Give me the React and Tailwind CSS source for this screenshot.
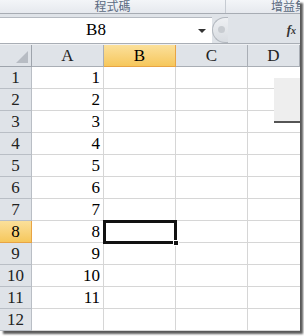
import React from 'react'

const cols = ['A', 'B', 'C', 'D']
const rows = [1, 2, 3, 4, 5, 6, 7, 8, 9, 10, 11, 12]
const font = { fontFamily: '"Liberation Serif", "Noto Sans CJK TC", serif' }

export default function App() {
  return (
    <div className="w-[304px] h-[336px] bg-white overflow-hidden relative" style={font}>
      <div className="w-[300px] h-[331px] bg-white flex flex-col shadow-[3px_3px_2px_rgba(0,0,0,0.65)]">
        {/* ribbon group labels */}
        <div className="h-[14px] flex bg-gradient-to-b from-[#f3f5f8] to-[#e6e9ee] border-b border-[#a7acb3] text-[12px] leading-[12px] text-[#5b6b82]" style={{ fontFamily: '"Noto Sans CJK TC", sans-serif' }}>
          <div className="w-[226px] border-r border-[#c6cbd2] flex justify-center items-start">
            <span>程式碼</span>
          </div>
          <div className="flex-1 pl-[45px] overflow-hidden whitespace-nowrap">增益集</div>
        </div>
        {/* formula bar */}
        <div className="h-[30px] bg-[#dfe3e8] flex items-center border-b border-[#a9aeb5] pt-[2px]">
          <div className="w-[212px] h-[26px] bg-white border-t border-[#b5bac1] flex items-center relative">
            <span className="flex-1 text-center text-[17px] text-black pr-[20px]">B8</span>
            <span className="absolute right-[6px] top-[11px] w-0 h-0 border-l-[4px] border-r-[4px] border-t-[4px] border-l-transparent border-r-transparent border-t-[#333]" />
          </div>
          <div className="w-[16px] h-[26px] rounded-l-full border border-[#b3b8bf] border-r-0 bg-gradient-to-b from-[#eef0f3] to-[#d8dce1] flex items-center justify-center">
            <span className="w-[7px] h-[7px] rounded-full bg-[#c8ccd1] ml-[2px]" />
          </div>
          <div className="flex-1 flex justify-end pr-[4px]">
            <span className="italic font-bold text-[13px] text-[#333]">f<span className="text-[10px]">x</span></span>
          </div>
        </div>
        <div className="h-[1px] bg-[#eef0f3]" />
        {/* sheet */}
        <div className="grid grid-cols-[32px_72px_72px_72px_1fr] relative">
          <div className="h-[22px] bg-[#dfe3e8] border-r border-b border-[#9ea4ac] relative">
            <span className="absolute right-[3px] bottom-[3px] w-0 h-0" style={{ borderBottom: '12px solid #b7bcc3', borderLeft: '12px solid transparent' }} />
          </div>
          {cols.map(c => (
            <div
              key={c}
              className={
                c === 'B'
                  ? 'h-[22px] bg-gradient-to-b from-[#fbe09a] to-[#f6c75a] border-r border-b border-[#e8a444] flex items-center justify-center text-[17px] text-black'
                  : 'h-[22px] bg-[#dfe3e8] border-r border-b border-[#a9aeb5] flex items-center justify-center text-[17px] text-[#222]'
              }
            >
              {c}
            </div>
          ))}
          {rows.map(r => (
            <React.Fragment key={r}>
              <div
                className={
                  r === 8
                    ? 'h-[22px] bg-gradient-to-b from-[#fbe09a] to-[#f6c75a] border-r border-b border-[#e8a444] flex items-center justify-center text-[17px] text-black'
                    : 'h-[22px] bg-[#dfe3e8] border-r border-b border-[#b9bec5] flex items-center justify-center text-[17px] text-[#222]'
                }
              >
                {r}
              </div>
              <div className="h-[22px] border-r border-b border-[#d6d6d6] flex items-center justify-end pr-[3px] text-[17px] text-black">
                {r <= 11 ? r : ''}
              </div>
              <div className="h-[22px] border-r border-b border-[#d6d6d6]" />
              <div className="h-[22px] border-r border-b border-[#d6d6d6]" />
              <div className="h-[22px] border-b border-[#d6d6d6]" />
            </React.Fragment>
          ))}
          {/* active cell B8 */}
          <div className="absolute left-[103px] top-[175px] w-[74px] h-[24px] border-[3px] border-[#111] pointer-events-none">
            <span className="absolute -right-[5px] -bottom-[5px] w-[6px] h-[6px] bg-[#111] border border-white" />
          </div>
          {/* floating panel */}
          <div className="absolute left-[274px] top-[33px] w-[26px] h-[45px] bg-[#eeeeee] border-b-2 border-[#555]" />
        </div>
      </div>
    </div>
  )
}
